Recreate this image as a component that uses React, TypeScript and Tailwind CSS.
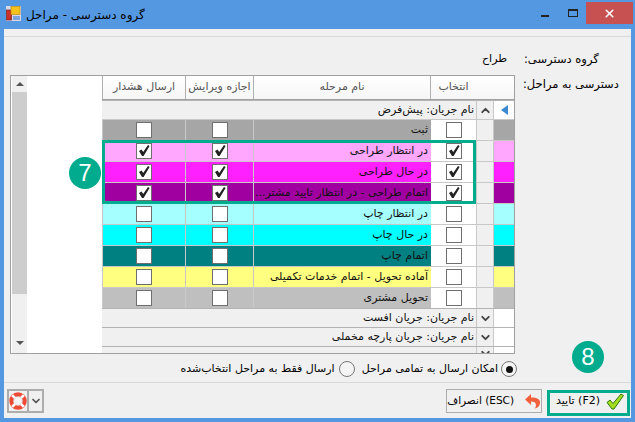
import { ChevronDown, ChevronUp, X } from 'lucide-react';

const stages = [
  { name: 'ثبت', bg: 'bg-[#a6a6a6]', checked: false },
  { name: 'در انتظار طراحی', bg: 'bg-[#ffa6ff]', checked: true },
  { name: 'در حال طراحی', bg: 'bg-[#ff20ff]', checked: true },
  { name: 'اتمام طراحی - در انتظار تایید مشتر...', bg: 'bg-[#a000a0]', checked: true },
  { name: 'در انتظار چاپ', bg: 'bg-[#a6ffff]', checked: false },
  { name: 'در حال چاپ', bg: 'bg-[#00ffff]', checked: false },
  { name: 'اتمام چاپ', bg: 'bg-[#008080]', checked: false },
  { name: 'آماده تحویل - اتمام خدمات تکمیلی', bg: 'bg-[#ffff80]', checked: false },
  { name: 'تحویل مشتری', bg: 'bg-[#bfbfbf]', checked: false },
];

const gridCols = 'grid grid-cols-[84px_68px_177px_45px_18px_20px]';

function Box({ checked }: { checked: boolean }) {
  return (
    <span className="flex h-[16px] w-[16px] items-center justify-center border border-[#6f6f6f] bg-white">
      {checked && (
        <svg width="14" height="14" viewBox="0 0 14 14">
          <path d="M2 7L4.6 5.6 6.2 8 11 1l1.6 1-6 10H5z" fill="#222" />
        </svg>
      )}
    </span>
  );
}

function GroupRow({ title, open, h, arrow, cut }: { title: string; open?: boolean; h: string; arrow?: boolean; cut?: boolean }) {
  return (
    <div className={gridCols + ' ' + h + ' overflow-hidden border-t border-[#b4b4b4] bg-[#f0f0f0]'}>
      <div dir="rtl" className="col-span-4 flex items-center pr-[2px] text-[11px] text-[#111]">
        {title}
      </div>
      <div className={'flex items-start justify-center border-x border-[#c8c8c8] text-[#444] ' + (cut ? 'pt-0' : 'pt-[3px]')}>
        {open ? <ChevronUp size={13} strokeWidth={3.5} /> : <ChevronDown size={13} strokeWidth={3.5} />}
      </div>
      <div className="flex items-center justify-center bg-white">
        {arrow && <span className="h-0 w-0 border-y-[5px] border-r-[7px] border-y-transparent border-r-[#3b8ad0]" />}
      </div>
    </div>
  );
}

export default function App() {
  return (
    <div className="relative h-[422px] w-[635px] overflow-hidden bg-[#5598e2] [font-family:'DejaVu_Sans',sans-serif] text-black">
      {/* Title bar */}
      <div className="flex h-[29px] items-start">
        <svg width="15" height="15" viewBox="0 0 15 15" className="ml-[6px] mt-[6px]">
          <rect x="0" y="0" width="15" height="15" fill="#d8d8e8" />
          <rect x="0.5" y="4" width="5" height="10" fill="#c9302c" stroke="#7a1f1c" strokeWidth="0.7" />
          <rect x="5" y="0.5" width="9" height="8" fill="#f6c21c" stroke="#b98a10" strokeWidth="0.7" />
          <rect x="7" y="10" width="7" height="4" fill="#7ba4dc" />
        </svg>
        <div dir="rtl" className="ml-[5px] mt-[6px] text-[12px] leading-[18px]">گروه دسترسی - مراحل</div>
        <div className="ml-auto flex items-start">
          <span className="mr-[19px] mt-[15px] h-[2px] w-[8px] bg-[#222]" />
          <span className="mr-[8px] mt-[9px] h-[8px] w-[10px] border border-t-2 border-[#222]" />
          <span className="mr-[2px] mt-[2px] flex h-[22px] w-[47px] items-center justify-center bg-[#c75050] text-white">
            <X size={13} strokeWidth={3} />
          </span>
        </div>
      </div>

      {/* Client area */}
      <div className="mx-[4px] flex h-[389px] w-[627px] flex-col bg-[#f0f0f0]">
        <div className="mt-[7px] border-t border-[#d9d9d9]" />
        <div className="flex h-[38px] items-start pt-[13px] text-[11.5px] leading-[18px]">
          <span dir="rtl" className="ml-[481px] w-[22px] whitespace-nowrap text-[11px]">طراح</span>
          <span dir="rtl" className="ml-[17px] w-[90px] text-left">گروه دسترسی:</span>
        </div>

        <div className="flex items-start">
          {/* Grid panel */}
          <div className="relative ml-[6px] flex h-[279px] w-[505px] border border-[#a0a0a0] bg-white pl-[1px] text-[11px]">
            <div className="flex w-[15px] flex-col items-center bg-[#f0f0f0]">
              <span className="mt-[6px] h-0 w-0 border-x-[4px] border-b-[4px] border-x-transparent border-b-[#555]" />
              <div className="mt-[6px] h-[202px] w-full bg-[#cdcdcd]" />
              <span className="mt-[47px] h-0 w-0 border-x-[4px] border-t-[4px] border-x-transparent border-t-[#555]" />
            </div>
            <div className="w-[75px] bg-white" />
            <div className="relative w-[412px] bg-[#f0f0f0]">
              {/* Header */}
              <div className={gridCols + ' h-[24px] border-b border-[#a0a0a0] bg-gradient-to-b from-white to-[#f6f6f6] text-[#555]'}>
                <div dir="rtl" className="flex items-center justify-center border-x border-[#b0b0b0]">ارسال هشدار</div>
                <div dir="rtl" className="flex items-center justify-center border-r border-[#b0b0b0]">اجازه ویرایش</div>
                <div dir="rtl" className="flex items-center justify-center border-r border-[#b0b0b0]">نام مرحله</div>
                <div dir="rtl" className="flex items-center justify-center">انتخاب</div>
                <div className="col-span-2" />
              </div>

              <GroupRow title="نام جریان:  پیش‌فرض" open arrow h="h-[19px]" />

              {stages.map((s) => (
                <div key={s.name} className={gridCols + ' h-[21px] border-t border-[#c8c8c8]'}>
                  <div className={s.bg + ' flex items-center justify-center border-x border-[#c8c8c8]'}>
                    <Box checked={s.checked} />
                  </div>
                  <div className={s.bg + ' flex items-center justify-center border-r border-[#c8c8c8]'}>
                    <Box checked={s.checked} />
                  </div>
                  <div dir="rtl" className={s.bg + ' flex items-center overflow-hidden whitespace-nowrap pr-[3px] text-[#111]'}>
                    {s.name}
                  </div>
                  <div className="flex items-center justify-center bg-white">
                    <Box checked={s.checked} />
                  </div>
                  <div className="border-x border-[#c8c8c8] bg-[#f0f0f0]" />
                  <div className={s.bg} />
                </div>
              ))}

              <GroupRow title="نام جریان:  جریان افست" h="h-[19px]" />
              <GroupRow title="نام جریان:  جریان پارچه مخملی" h="h-[19px]" />
              <GroupRow title="" cut h="h-[7px]" />

              {/* Highlight around the checked rows */}
              <div className="absolute left-0 top-[64px] h-[64px] w-[374px] border-[3px] border-[#00ab8e]" />
            </div>
            <div className="absolute left-[58px] top-[81px] flex h-[32px] w-[32px] items-center justify-center rounded-full bg-[#00ab8e] text-[24px] text-white [font-family:'Liberation_Sans',sans-serif]">
              7
            </div>
          </div>
          <span dir="rtl" className="ml-[8px] w-[100px] whitespace-nowrap text-left text-[11.5px] leading-[18px]">دسترسی به مراحل:</span>
        </div>

        {/* Send options */}
        <div dir="rtl" className="flex h-[28px] items-center pr-[114px] pt-[2px] text-[11px]">
          <span className="flex h-[16px] w-[16px] items-center justify-center rounded-full border border-[#777] bg-[#f4f4f4]">
            <span className="h-[7px] w-[7px] rounded-full bg-[#111]" />
          </span>
          <span className="mr-[3px]">امکان ارسال به تمامی مراحل</span>
          <span className="mr-[7px] h-[16px] w-[16px] rounded-full border border-[#777] bg-[#f4f4f4]" />
          <span className="mr-[4px]">ارسال فقط به مراحل انتخاب‌شده</span>
        </div>

        <div className="border-t border-[#d9d9d9]" />

        {/* Footer */}
        <div className="flex h-[35px] items-center pl-[3px] pt-[1px]">
          <div className="flex h-[24px] w-[37px] border-2 border-[#adadad]">
            <span className="flex w-[20px] items-center justify-center border-r-2 border-[#adadad]">
              <svg width="18" height="18" viewBox="0 0 20 20">
                <circle cx="10" cy="10" r="7.4" fill="none" stroke="#ee4b35" strokeWidth="4.6" />
                <path d="M3.5 3.5l3.6 3.6M16.5 3.5l-3.6 3.6M3.5 16.5l3.6-3.6M16.5 16.5l-3.6-3.6" stroke="#fff" strokeWidth="3" />
                <circle cx="10" cy="10" r="4.6" fill="#f6f6f6" stroke="#c9c9c9" strokeWidth="0.6" />
              </svg>
            </span>
            <span className="flex flex-1 items-center justify-center text-[#555]">
              <ChevronDown size={12} strokeWidth={3.5} />
            </span>
          </div>
          <div dir="rtl" className="ml-auto flex h-[24px] w-[96px] items-center border border-[#adadad] pr-[1px] text-[10.5px] whitespace-nowrap">
            <svg width="16" height="17" viewBox="0 0 16 17" className="ml-[10px] shrink-0">
              <path d="M7 1L1 6.5 7 12V8.5c3 0 5 1 5 3.5 0 1.5-.5 2.5-1.5 3.5 3.5-.5 5.5-3 5.5-6 0-3.5-3-5-9-5z" fill="#f2603c" />
            </svg>
            <span>(ESC) انصراف</span>
          </div>
          <div dir="rtl" className="ml-[7px] mr-[3px] flex h-[24px] w-[79px] items-center pr-[4px] text-[11px] whitespace-nowrap">
            <svg width="18" height="17" viewBox="0 0 18 17" className="ml-[6px] shrink-0">
              <path d="M1 9.5L4 7l3 3.5L15 1l2.5 1.5L8 16H6z" fill="#a4dc20" stroke="#2f7a10" strokeWidth="1" />
            </svg>
            <span>(F2) تایید</span>
          </div>
        </div>
      </div>

      {/* Step 8 marker */}
      <div className="absolute left-[547px] top-[390px] h-[26px] w-[83px] border-[3px] border-[#00ab8e]" />
      <div className="absolute left-[572px] top-[341px] flex h-[32px] w-[32px] items-center justify-center rounded-full bg-[#00ab8e] text-[24px] text-white [font-family:'Liberation_Sans',sans-serif]">
        8
      </div>
    </div>
  );
}
